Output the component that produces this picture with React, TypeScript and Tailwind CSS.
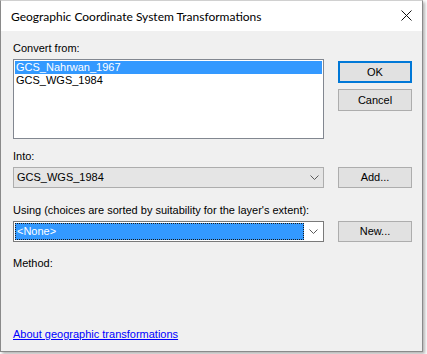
import React from "react";

const Chevron: React.FC = () => (
  <svg width="9" height="5" viewBox="0 0 9 5" className="block">
    <path d="M0.5 0.5 L4.5 4.5 L8.5 0.5" fill="none" stroke="#5a5a5a" strokeWidth="1" />
  </svg>
);

const Btn: React.FC<{ label: string; primary?: boolean; h?: string }> = ({ label, primary, h }) => (
  <div
    className={`w-[74px] ${h || "h-[22px]"} flex items-center justify-center bg-[#e1e1e1] text-[11px] leading-[13px] text-black ${
      primary ? "border-2 border-[#0078d7]" : "border border-[#adadad]"
    }`}
  >
    {label}
  </div>
);

const App: React.FC = () => {
  return (
    <div
      className="w-[427px] h-[354px] bg-white"
      style={{ fontFamily: '"Liberation Sans", Arial, sans-serif' }}
    >
      <div className="w-[423px] h-[352px] flex flex-col bg-[#f0f0f0] border border-[#8a8a8a] border-t-[#d0d0d0] shadow-[2px_2px_3px_rgba(0,0,0,0.3)]">
        {/* title bar */}
        <div className="h-[30px] bg-white flex items-center justify-between pl-[10px] pr-[10px] shrink-0">
          <span
            className="text-[12px] text-black leading-[16px] pt-[1px]"
            style={{ fontFamily: 'Lato, "Noto Sans", sans-serif' }}
          >
            Geographic Coordinate System Transformations
          </span>
          <svg width="11" height="11" viewBox="0 0 11 11" className="mb-[2px]">
            <path d="M0.5 0.5 L10.5 10.5 M10.5 0.5 L0.5 10.5" stroke="#111" strokeWidth="1" />
          </svg>
        </div>

        {/* body */}
        <div className="flex-1 flex flex-col pl-[12px] pr-[10px] pt-[11px] text-[11px] leading-[13px] text-black">
          {/* convert from */}
          <div className="flex">
            <div className="w-[311px] flex flex-col">
              <div className="h-[13px] mb-[4px]">Convert from:</div>
              <div className="h-[80px] bg-white border border-[#828790] p-[1px]">
                <div className="h-[13px] bg-[#3399ff] text-white pl-[1px]">GCS_Nahrwan_1967</div>
                <div className="h-[13px] pl-[1px]">GCS_WGS_1984</div>
              </div>
            </div>
            <div className="ml-[14px] flex flex-col gap-[6px] pt-[19px]">
              <Btn label="OK" primary />
              <Btn label="Cancel" />
            </div>
          </div>

          {/* into */}
          <div className="flex mt-[11px]">
            <div className="w-[311px] flex flex-col">
              <div className="h-[13px] mb-[4px]">Into:</div>
              <div className="h-[21px] flex items-center justify-between bg-[#e5e5e5] border border-[#adadad] pl-[3px] pr-[4px]">
                <span>GCS_WGS_1984</span>
                <Chevron />
              </div>
            </div>
            <div className="ml-[14px] flex flex-col pt-[17px]">
              <Btn label="Add..." h="h-[21px]" />
            </div>
          </div>

          {/* using */}
          <div className="flex mt-[16px]">
            <div className="w-[311px] flex flex-col">
              <div className="h-[13px] mb-[4px] whitespace-nowrap">
                Using (choices are sorted by suitability for the layer's extent):
              </div>
              <div className="h-[21px] flex items-center bg-white border border-[#7a7a7a] p-[1px]">
                <div className="flex-1 h-full bg-[#3399ff] text-white border border-dotted border-[#1a1a1a] flex items-center pl-[1px]">
                  &lt;None&gt;
                </div>
                <div className="w-[18px] flex items-center justify-center">
                  <Chevron />
                </div>
              </div>
            </div>
            <div className="ml-[14px] flex flex-col pt-[17px]">
              <Btn label="New..." h="h-[21px]" />
            </div>
          </div>

          <div className="h-[13px] mt-[15px]">Method:</div>

          <div className="flex-1" />
          <div className="mb-[10px]">
            <span className="text-[#0000ff] underline">About geographic transformations</span>
          </div>
        </div>
      </div>
    </div>
  );
};

export default App;
